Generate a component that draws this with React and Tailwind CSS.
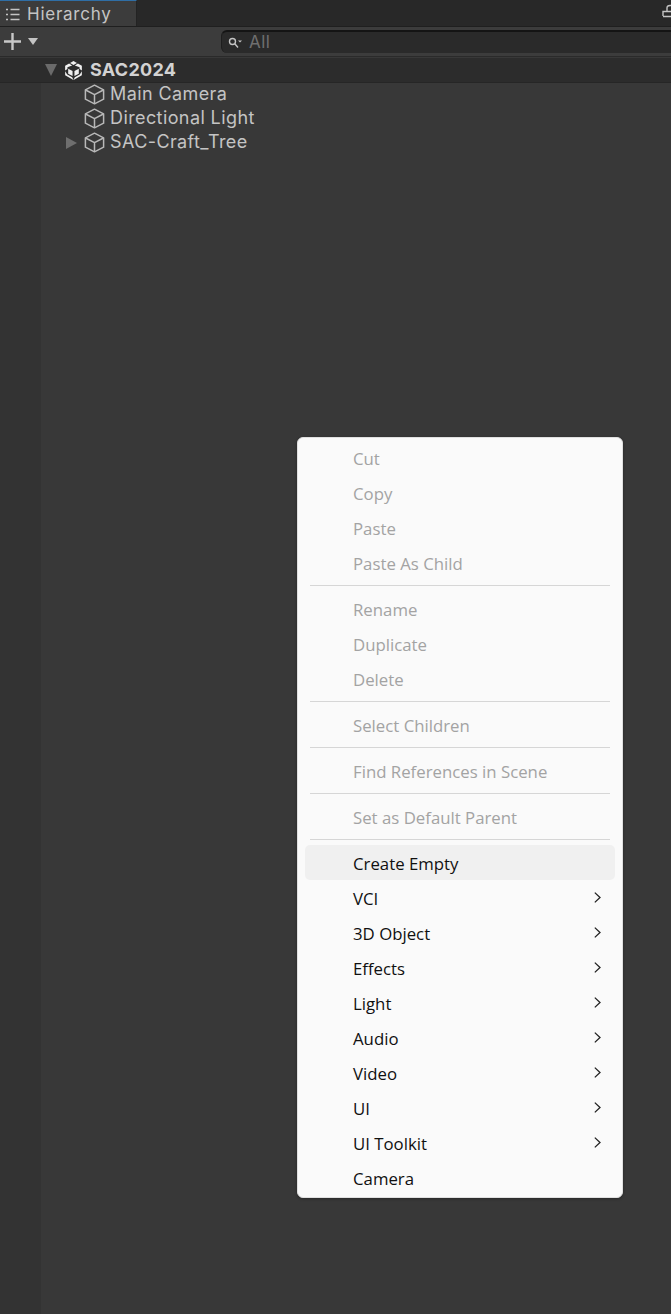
const UNITY_FONT = "font-['Inter','Noto_Sans',sans-serif]";

function Cube() {
  return (
    <svg className="w-[21px] h-[21px] shrink-0 mb-px" viewBox="0 0 21 21" fill="none" stroke="#b8b8b8" strokeWidth="1.5" strokeLinejoin="round">
      <path d="M10.5 1.2 L19.6 5.8 V15.2 L10.5 19.8 L1.4 15.2 V5.8 Z" />
      <path d="M1.6 6 L10.5 10.6 L19.4 6 M10.5 10.6 V19.6" />
    </svg>
  );
}

function UnityLogo() {
  return (
    <svg className="w-[19px] h-[21px] shrink-0" viewBox="0 0 20 21" fill="#f0f0f0">
      <path d="M10 0.4 L13.6 2.6 L10 4.6 L6.4 2.6 Z" />
      <path d="M14.6 3.2 L18.8 5.6 V10.4 L16.4 9 V7.2 L11.4 5.2 Z" />
      <path d="M5.4 3.2 L1.2 5.6 V10.4 L3.6 9 V7.2 L8.6 5.2 Z" />
      <path d="M9 11 V16.4 L4.4 13.8 V8.6 Z" />
      <path d="M11 11 V16.4 L15.6 13.8 V8.6 Z" />
      <path d="M1.2 11.4 L3.4 14.8 L8.6 17.6 L10 20.6 L1.2 15.6 Z" />
      <path d="M18.8 11.4 L16.6 14.8 L11.4 17.6 L10 20.6 L18.8 15.6 Z" />
    </svg>
  );
}

function TreeRow({ label, arrow }) {
  return (
    <div className="h-6 flex items-center pl-[66px]">
      <div className="w-[18px] shrink-0">
        {arrow && <div className="w-0 h-0 border-y-[6px] border-y-transparent border-l-[11px] border-l-[#6e6e6e]" />}
      </div>
      <Cube />
      <span className="ml-[5px] mb-[4px] text-[18px] tracking-[0.4px] text-[#c4c4c4] whitespace-nowrap">{label}</span>
    </div>
  );
}

function Separator() {
  return (
    <div className="h-[11px] flex items-center px-[12px]">
      <div className="h-px w-full bg-[#d6d6d6]" />
    </div>
  );
}

function MenuItem({ label, disabled, hover, sub }) {
  return (
    <div className={`h-[35px] mx-[7px] pl-[48px] pr-[14px] flex items-center justify-between rounded-[5px] text-[16.8px] ${disabled ? "text-[#a3a3a3]" : "text-[#101010]"} ${hover ? "bg-[#f0f0f0]" : ""}`}>
      <span className="mt-[2px]">{label}</span>
      {sub && (
        <svg className="w-[7px] h-[11px]" viewBox="0 0 7 11" fill="none" stroke="#222" strokeWidth="1.3">
          <path d="M0.8 0.6 L6 5.5 L0.8 10.4" />
        </svg>
      )}
    </div>
  );
}

function ContextMenu() {
  return (
    <div className="absolute left-[297px] top-[437px] w-[326px] h-[761px] pt-[2px] bg-[#fafafa] border border-[#e0e0e0] rounded-[6px] shadow-[0_1px_3px_rgba(0,0,0,0.3)] font-['Open_Sans','Noto_Sans',sans-serif]">
      <MenuItem label="Cut" disabled />
      <MenuItem label="Copy" disabled />
      <MenuItem label="Paste" disabled />
      <MenuItem label="Paste As Child" disabled />
      <Separator />
      <MenuItem label="Rename" disabled />
      <MenuItem label="Duplicate" disabled />
      <MenuItem label="Delete" disabled />
      <Separator />
      <MenuItem label="Select Children" disabled />
      <Separator />
      <MenuItem label="Find References in Scene" disabled />
      <Separator />
      <MenuItem label="Set as Default Parent" disabled />
      <Separator />
      <MenuItem label="Create Empty" hover />
      <MenuItem label="VCI" sub />
      <MenuItem label="3D Object" sub />
      <MenuItem label="Effects" sub />
      <MenuItem label="Light" sub />
      <MenuItem label="Audio" sub />
      <MenuItem label="Video" sub />
      <MenuItem label="UI" sub />
      <MenuItem label="UI Toolkit" sub />
      <MenuItem label="Camera" />
    </div>
  );
}

export default function App() {
  return (
    <div className={`relative w-[671px] h-[1314px] overflow-hidden flex flex-col bg-[#383838] ${UNITY_FONT}`}>
      {/* tab bar */}
      <div className="h-[27px] shrink-0 flex justify-between bg-[#282828] border-b border-[#1f1f1f]">
        <div className="w-[137px] flex items-center bg-[#3c3c3c] border-t border-t-[#2f6ea5] border-r border-r-[#232323] pl-[5px]">
          <svg className="w-[15px] h-[15px] mt-[1px]" viewBox="0 0 15 15" fill="none" stroke="#c4c4c4" strokeWidth="1.3">
            <path d="M1 2.5 H3 M1 7.5 H3 M1 12.5 H3 M5.5 2.5 H14.5 M5.5 7.5 H14.5 M5.5 12.5 H14.5" />
          </svg>
          <span className="ml-[7px] mt-[2px] text-[17px] tracking-[0.75px] text-[#c4c4c4]">Hierarchy</span>
        </div>
        <svg className="w-[9px] h-[16px] mt-[4px]" viewBox="0 0 9 16" fill="none" stroke="#c4c4c4" strokeWidth="1.4">
          <path d="M1 12 V7.5 H9 M1 12.5 H9 M5 7 V4 Q5 1.5 8 1.5 H9" />
        </svg>
      </div>

      {/* toolbar */}
      <div className="h-[30px] shrink-0 flex items-center bg-[#3c3c3c] border-b border-[#2a2a2a]">
        <svg className="w-[19px] h-[19px] ml-[3px]" viewBox="0 0 19 19" stroke="#c8c8c8" strokeWidth="2.4">
          <path d="M9.5 1 V18 M1 9.5 H18" />
        </svg>
        <div className="ml-[6px] w-0 h-0 border-x-[5.5px] border-x-transparent border-t-[7px] border-t-[#c4c4c4]" />
        <div className="ml-[183px] flex-1 h-[23px] flex items-center rounded-l-[6px] bg-[#2a2a2a] border-t-2 border-t-[#141414] border-l border-l-[#1e1e1e]">
          <svg className="w-[14px] h-[12px] ml-[6px]" viewBox="0 0 14 12" fill="none" stroke="#c4c4c4" strokeWidth="1.4">
            <circle cx="4.5" cy="4.5" r="3" />
            <path d="M6.8 6.8 L10 10.5" />
            <path d="M10 3.5 H14 L12 5.5 Z" fill="#c4c4c4" stroke="none" />
          </svg>
          <span className="ml-[7px] text-[17px] tracking-[0.4px] text-[#6f6f6f]">All</span>
        </div>
      </div>

      {/* scene header */}
      <div className="h-[25px] shrink-0 flex items-center mt-px pl-[45px] bg-[#2c2c2c] border-b border-[#262626]">
        <div className="w-0 h-0 border-x-[6px] border-x-transparent border-t-[12px] border-t-[#6a6a6a]" />
        <div className="ml-[7px]"><UnityLogo /></div>
        <span className="ml-[7px] mb-px text-[18px] font-bold tracking-[0.3px] text-[#d2d2d2]">SAC2024</span>
      </div>

      {/* tree body */}
      <div className="flex-1 flex">
        <div className="w-[41px] shrink-0 bg-[#333333]" />
        <div className="flex-1 -ml-[41px]">
          <TreeRow label="Main Camera" />
          <TreeRow label="Directional Light" />
          <TreeRow label="SAC-Craft_Tree" arrow />
        </div>
      </div>

      <ContextMenu />
    </div>
  );
}
